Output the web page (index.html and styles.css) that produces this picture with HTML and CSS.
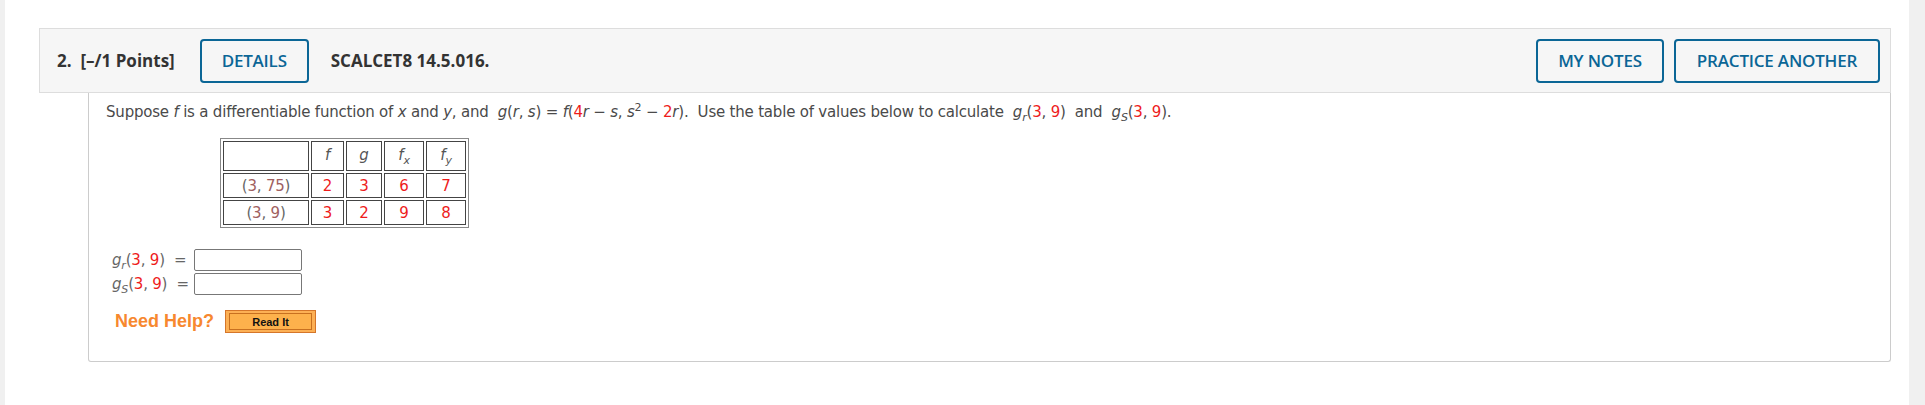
FILE: index.html
```html
<!DOCTYPE html>
<html>
<head>
<meta charset="utf-8">
<link rel="stylesheet" href="styles.css">
</head>
<body>
<div class="page">
  <div class="gutter-left"></div>
  <div class="main">
    <div class="qhead">
      <div class="qhead-left">
        <span class="qnum">2.&nbsp; [–/1 Points]</span>
        <button class="btn">DETAILS</button>
        <span class="qid">SCALCET8 14.5.016.</span>
      </div>
      <div class="qhead-right">
        <button class="btn">MY NOTES</button>
        <button class="btn">PRACTICE ANOTHER</button>
      </div>
    </div>
    <div class="qbody">
      <p class="stem">Suppose <i>f</i> is a differentiable function of <i>x</i> and <i>y</i>, and&nbsp; <i>g</i>(<i>r</i>, <i>s</i>) = <i>f</i>(<span class="r">4</span><i>r</i> − <i>s</i>, <i>s</i><sup>2</sup> − <span class="r">2</span><i>r</i>).&nbsp; Use the table of values below to calculate&nbsp; <i>g<sub>r</sub></i>(<span class="r">3</span>, <span class="r">9</span>)&nbsp; and&nbsp; <i>g<sub>S</sub></i>(<span class="r">3</span>, <span class="r">9</span>).</p>
      <table class="vals">
        <tr class="hrow">
          <td class="c0"></td>
          <td class="c1"><i>f</i></td>
          <td class="c2"><i>g</i></td>
          <td class="c3"><i>f<sub>x</sub></i></td>
          <td class="c4"><i>f<sub>y</sub></i></td>
        </tr>
        <tr>
          <td class="pt">(<span class="m">3</span>, <span class="m">75</span>)</td>
          <td class="r">2</td>
          <td class="r">3</td>
          <td class="r">6</td>
          <td class="r">7</td>
        </tr>
        <tr>
          <td class="pt">(<span class="m">3</span>, <span class="m">9</span>)</td>
          <td class="r">3</td>
          <td class="r">2</td>
          <td class="r">9</td>
          <td class="r">8</td>
        </tr>
      </table>
      <div class="answers">
        <div class="arow">
          <span class="alabel"><i>g<sub>r</sub></i>(<span class="r">3</span>, <span class="r">9</span>) &nbsp;=</span>
          <span class="abox"></span>
        </div>
        <div class="arow">
          <span class="alabel"><i>g<sub>S</sub></i>(<span class="r">3</span>, <span class="r">9</span>) &nbsp;=</span>
          <span class="abox"></span>
        </div>
      </div>
      <div class="help">
        <span class="needhelp">Need Help?</span>
        <span class="readit"><span class="readit-inner">Read It</span></span>
      </div>
    </div>
  </div>
  <div class="gutter-right"></div>
</div>
</body>
</html>
```

FILE: styles.css
```css
html, body {
  margin: 0;
  padding: 0;
  background: #ffffff;
}
.page {
  display: flex;
  width: 1925px;
  height: 405px;
}
.gutter-left {
  width: 5px;
  background: #f0f0f0;
  flex: none;
}
.gutter-right {
  width: 16px;
  background: #f0f0f0;
  flex: none;
}
.main {
  flex: 1;
  padding-top: 28px;
}
.qhead {
  margin-left: 34px;
  margin-right: 18px;
  height: 63px;
  border: 1px solid #dddddd;
  background: #f6f6f6;
  display: flex;
  justify-content: space-between;
  align-items: center;
  padding: 0 10px 0 17px;
  font-family: "Open Sans", sans-serif;
}
.qhead-left, .qhead-right {
  display: flex;
  align-items: center;
}
.qhead-right {
  gap: 10px;
}
.qnum {
  font-size: 17px;
  font-weight: 700;
  color: #333333;
}
.qid {
  font-size: 17px;
  font-weight: 700;
  color: #333333;
  margin-left: 22px;
}
.btn {
  font-family: "Open Sans", sans-serif;
  font-size: 17px;
  font-weight: 600;
  color: #0b6696;
  background: transparent;
  border: 2px solid #0b6696;
  border-radius: 4px;
  height: 44px;
  padding: 0;
  letter-spacing: -0.2px;
}
.qhead-left .btn {
  margin-left: 25px;
  width: 109px;
}
.qhead-right .btn:first-child { width: 128px; }
.qhead-right .btn:last-child { width: 206px; }
.qbody {
  margin-left: 83px;
  margin-right: 18px;
  border: 1px solid #cccccc;
  border-top: none;
  border-radius: 0 0 3px 3px;
  height: 268px;
  padding: 0 0 0 17px;
  font-family: "DejaVu Sans", Verdana, sans-serif;
  font-size: 15px;
  letter-spacing: -0.2px;
  color: #4a4a4a;
}
.stem {
  margin: 0;
  padding-top: 10px;
  line-height: 18px;
  white-space: nowrap;
}
i { font-style: italic; }
sub, sup {
  font-size: 11px;
  line-height: 0;
}
sub { vertical-align: -4px; }
sup { vertical-align: 6px; }
.r { color: #ee1c1c; }
.m { color: #a06060; }
.vals {
  margin-top: 17px;
  margin-left: 114px;
  border: 1px solid #888888;
  border-spacing: 2px;
  border-collapse: separate;
  line-height: 16px;
}
.vals td {
  box-sizing: border-box;
  border: 1px solid #444444;
  text-align: center;
  padding: 0;
  height: 25px;
}
.vals .hrow td {
  height: 30px;
  color: #555555;
  padding-bottom: 2px;
}
.vals .c0 { width: 86px; }
.vals .c1 { width: 33px; }
.vals .c2 { width: 36px; }
.vals .c3 { width: 40px; }
.vals .c4 { width: 40px; }
.vals td.pt { color: #666666; }
.answers {
  margin-top: 21px;
  margin-left: 6px;
  display: flex;
  flex-direction: column;
  gap: 2px;
}
.arow {
  display: flex;
  align-items: center;
  height: 22px;
  line-height: 18px;
}
.alabel {
  width: 82px;
  color: #666666;
  white-space: nowrap;
}
.abox {
  box-sizing: border-box;
  width: 108px;
  height: 22px;
  border: 1px solid #777777;
  border-radius: 2px;
  background: #ffffff;
}
.help {
  margin-top: 15px;
  margin-left: 9px;
  display: flex;
  align-items: center;
  height: 23px;
}
.needhelp {
  font-family: "Liberation Sans", Arial, sans-serif;
  font-weight: 700;
  font-size: 18px;
  letter-spacing: 0;
  color: #f7882f;
}
.readit {
  margin-left: 11px;
  box-sizing: border-box;
  width: 91px;
  height: 23px;
  border: 1px solid #d5762a;
  background: #fcb055;
  padding: 2px 3px;
  display: flex;
}
.readit-inner {
  flex: 1;
  border: 1px solid #c8701f;
  background: #fdb14c;
  font-family: "Liberation Sans", Arial, sans-serif;
  font-weight: 700;
  font-size: 11px;
  letter-spacing: 0;
  color: #111111;
  display: flex;
  align-items: center;
  justify-content: center;
}
```
